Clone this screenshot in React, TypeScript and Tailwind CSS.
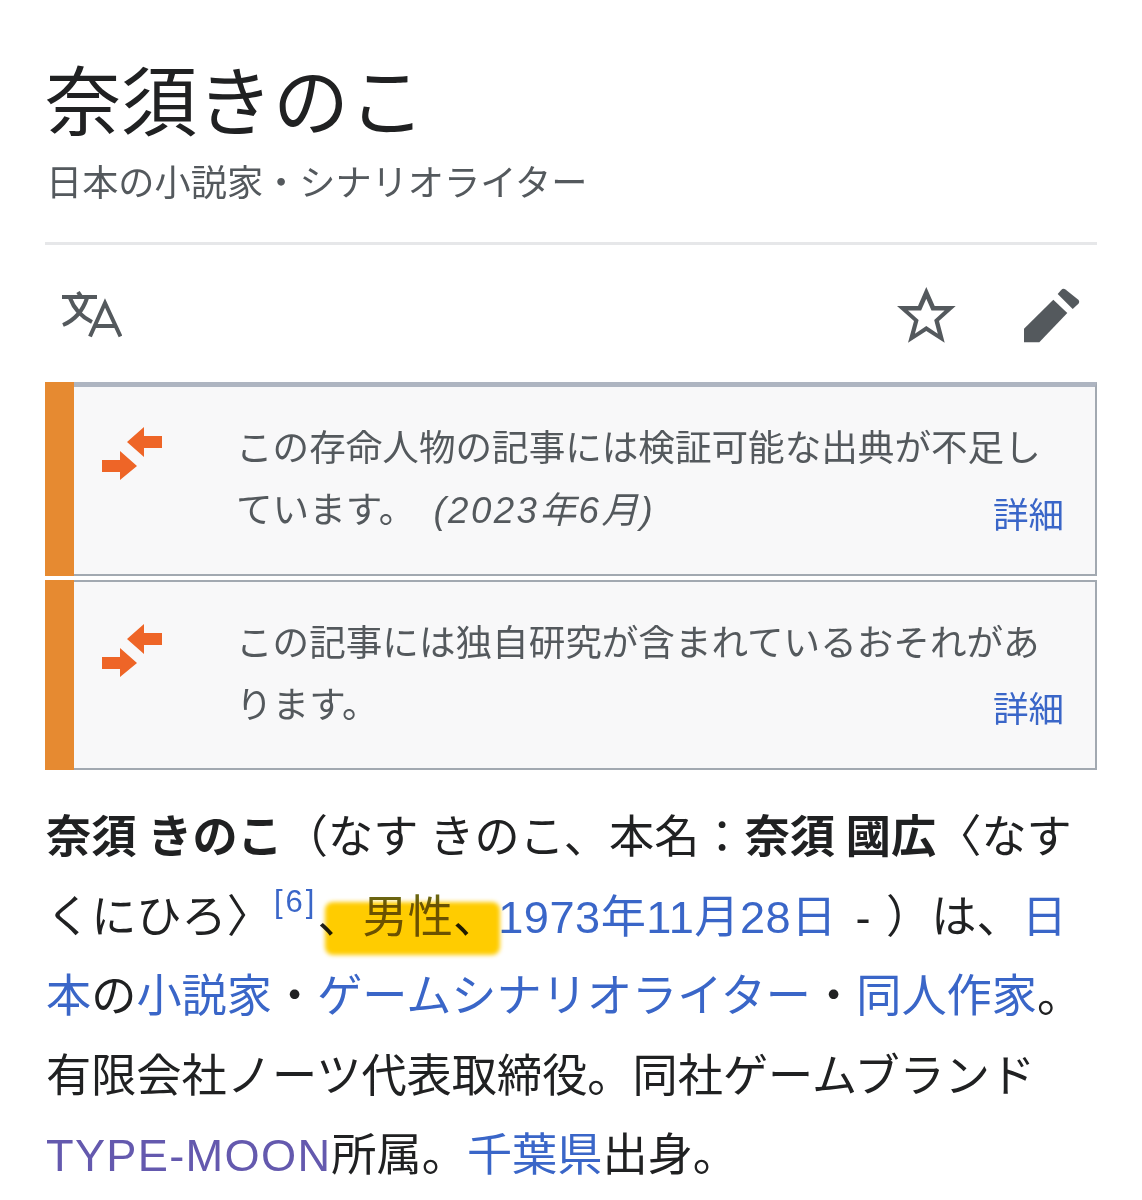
const jp = '"Liberation Sans", "Noto Sans CJK JP", sans-serif';

const TranslateIcon = () => (
  <svg width="62" height="50" viewBox="0 0 62 50" fill="none" stroke="#54595d">
    <path d="M2 7h35M18 2l4 6M27 8C23 20 15 30 3 35M10 8c4 11 12 19 22 24" strokeWidth="4" />
    <path d="M30 46.500L45 13l15.500 33.500M35 36h20" strokeWidth="4" />
  </svg>
);

const StarIcon = () => (
  <svg width="59" height="56" viewBox="0 0 59 56" fill="#54595d" fillRule="evenodd">
    <path d="M29.300 0l8.400 19h21L42 34l5.700 21.700L29.300 44 11 55.700 17 34 0 19h21zM29.300 11.800l-5.200 11.800H11l10.600 9.300-3.700 13.900 11.400-7.700 11.500 7.700-3.600-13.900 10.400-9.300H34.500z" />
  </svg>
);

const PencilIcon = () => (
  <svg width="56" height="55" viewBox="0 0 56 55" fill="#54595d">
    <path d="M0 54.300V40.700L29.300 11.700 43.300 25 15.300 54.300z" />
    <path d="M33.700 6L37 2.200c1.400-1.600 3-1.800 4.500-.6l12.500 10c1.500 1.300 1.500 2.900.4 4.200L48.700 21z" />
  </svg>
);

const MergeIcon = () => (
  <svg width="62" height="56" viewBox="0 0 62 56" fill="#ee6527">
    <path d="M60 11H42V2L25 17l17 15V23H60z" />
    <path d="M0 35H18V26L35 41 18 55V47H0z" />
  </svg>
);

const Notice = ({ lines, first }: { lines: React.ReactNode[]; first?: boolean }) => (
  <div className={`flex border-2 border-l-0 border-[#a2a9b1] bg-[#f8f8f9] ${first ? 'h-[194px] border-t-[5px] border-t-[#aeb5c1]' : 'h-[190px]'}`}>
    <div className={`w-[29px] shrink-0 -mb-[2px] bg-[#e68a31] ${first ? '-mt-[5px]' : '-mt-[2px]'}`} />
    <div className={`w-[162px] shrink-0 pl-[28px] ${first ? 'pt-[38px]' : 'pt-[40px]'}`}>
      <MergeIcon />
    </div>
    <div className="relative flex-1 pt-[31px] text-[36.600px] leading-[62px] text-[#54595d]">
      {lines.map((l, i) => (
        <div key={i} className="whitespace-nowrap">
          {l}
        </div>
      ))}
      <span className="absolute right-[31px] bottom-[36px] text-[35.500px] leading-[44px] text-[#3a66c8]">詳細</span>
    </div>
  </div>
);

const L = ({ children }: { children: React.ReactNode }) => <span className="text-[#3a66c8]">{children}</span>;

export default function App() {
  return (
    <div className="h-[1200px] w-[1142px] overflow-hidden bg-white px-[45px]" style={{ fontFamily: jp }}>
      <div className="pt-[60px]">
        <h1 className="text-[76px] leading-[88px] font-normal text-[#202122]">奈須きのこ</h1>
        <p className="mt-[13px] pl-[1px] text-[36.200px] leading-[46px] text-[#54595d]">日本の小説家・シナリオライター</p>
      </div>
      <div className="mt-[35px] h-[3px] bg-[#e6e7e9]" />
      <div className="flex h-[137px] items-center pl-[15px] pr-[17px] pt-[3px]">
        <TranslateIcon />
        <div className="ml-auto flex items-center gap-[68px]">
          <StarIcon />
          <PencilIcon />
        </div>
      </div>
      <div className="flex flex-col gap-[4px]">
        <Notice
          first
          lines={[
            'この存命人物の記事には検証可能な出典が不足し',
            <>
              ています。 <i className="ml-[8px] tracking-[2.500px]">(2023年6月)</i>
            </>,
          ]}
        />
        <Notice lines={['この記事には独自研究が含まれているおそれがあ', 'ります。']} />
      </div>
      <div className="relative mt-[28px] whitespace-nowrap pl-[1px] text-[45.200px] leading-[79.500px] text-[#202122]">
        <span className="[word-spacing:-1.700px]">
          <b>奈須 きのこ</b>（なす きのこ、本名：<b>奈須 國広</b>〈なす
        </span>
        <br />
        くにひろ〉
        <span className="relative -top-[21px] ml-[2px] text-[31px] leading-none tracking-[3px] text-[#3a66c8]">[6]</span>
        、<span className="text-[#6b6510]">男性</span>、<span className="tracking-[0.500px] text-[#3a66c8]">1973年11月28日</span>
        <span className="ml-[6px]"> - </span>
        <span className="ml-[3px]">）は、</span>
        <L>日</L>
        <br />
        <L>本</L>の<L>小説家</L>・<L>ゲームシナリオライター</L>・<L>同人作家</L>。
        <br />
        有限会社ノーツ代表取締役。同社ゲームブランド
        <br />
        <span className="tracking-[1.300px] text-[#6459ae]">TYPE-MOON</span>所属。<L>千葉県</L>出身。
        <div className="absolute left-[280px] top-[104px] h-[53px] w-[175px] rounded-[8px] bg-[#ffcc00] mix-blend-multiply blur-[2px]" />
      </div>
    </div>
  );
}
